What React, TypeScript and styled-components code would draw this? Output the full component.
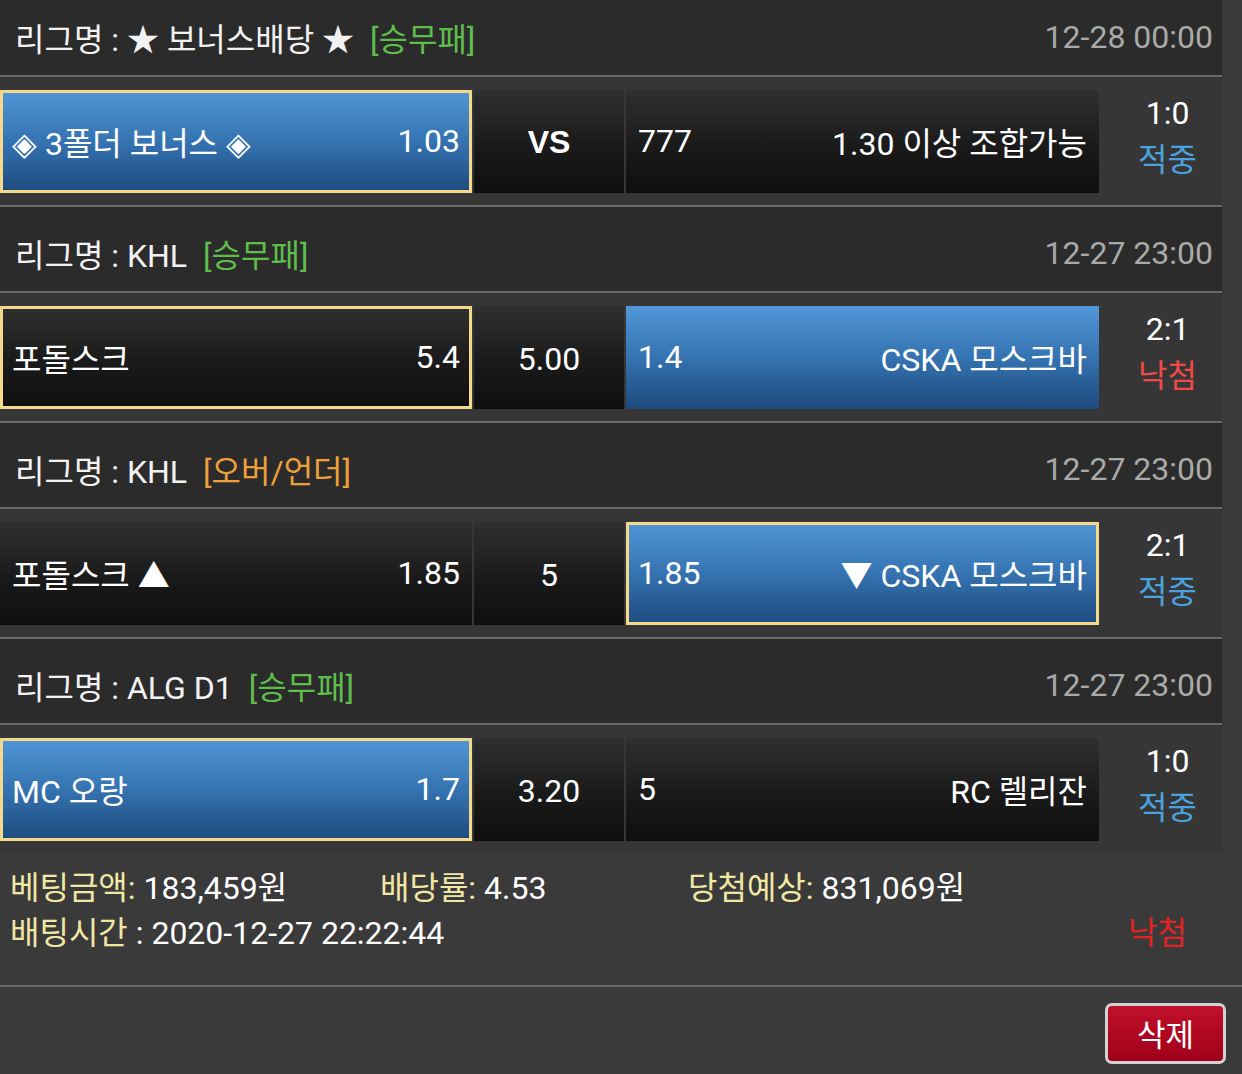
import React from 'react';
import styled, { createGlobalStyle, css } from 'styled-components';

const GlobalStyle = createGlobalStyle`
  html, body {
    margin: 0;
    background: #3a3a3a;
  }
  body {
    font-family: Roboto, "Noto Sans CJK KR", sans-serif;
    color: #fff;
    overflow: hidden;
  }
`;

const Page = styled.div`
  width: 1242px;
  height: 1074px;
  overflow: hidden;
  background: #3a3a3a;
`;

const List = styled.div`
  margin-top: -9px;
`;

const LeagueHeader = styled.div`
  display: flex;
  align-items: center;
  justify-content: space-between;
  width: 1222px;
  height: 84px;
  box-sizing: border-box;
  padding: 7px 9px 0 15px;
  background: #2b2b2b;
  font-size: 32px;
`;

const LeagueName = styled.span`
  color: #f2f2f2;
`;

const BetType = styled.span<{ $kind: 'wdl' | 'ou' }>`
  margin-left: 16px;
  color: ${({ $kind }) => ($kind === 'wdl' ? '#5fbe4b' : '#eda03a')};
`;

const MatchTime = styled.span`
  color: #a9a9a9;
`;

const Divider = styled.div<{ $full?: boolean }>`
  width: ${({ $full }) => ($full ? '100%' : '1222px')};
  height: 2px;
  background: #6a6a6a;
`;

const MatchRow = styled.div`
  display: grid;
  grid-template-columns: 472px 150px 473px 1fr;
  column-gap: 2px;
  align-items: start;
  width: 1222px;
  height: 128px;
  box-sizing: border-box;
  padding-top: 13px;
  background: #363636;
`;

const darkFill = css`
  background: linear-gradient(to bottom, #303030 0%, #1a1a1a 55%, #0e0e0e 100%);
`;

const blueFill = css`
  background: linear-gradient(to bottom, #5197d7 0%, #3573b1 50%, #1d4a7d 100%);
`;

const OddsCell = styled.div<{ $win?: boolean; $picked?: boolean }>`
  display: flex;
  align-items: center;
  justify-content: space-between;
  height: 103px;
  box-sizing: border-box;
  padding: 0 9px 2px 9px;
  ${({ $win }) => ($win ? blueFill : darkFill)};
  background-origin: border-box;
  border: 3px solid ${({ $picked }) => ($picked ? '#f4d98c' : 'transparent')};
  font-size: 32px;
  color: #fff;
  white-space: nowrap;
`;

const MidCell = styled.div<{ $bold?: boolean }>`
  display: flex;
  align-items: center;
  justify-content: center;
  height: 103px;
  padding-top: 2px;
  box-sizing: border-box;
  ${darkFill};
  font-size: 32px;
  font-weight: ${({ $bold }) => ($bold ? 700 : 400)};
  font-family: ${({ $bold }) => ($bold ? '"Liberation Sans", Arial, sans-serif' : 'inherit')};
`;

const ResultCell = styled.div`
  display: flex;
  flex-direction: column;
  align-items: center;
  padding-left: 12px;
  font-size: 32px;
  line-height: 47px;
`;

const Score = styled.span`
  color: #fff;
`;

const Outcome = styled.span<{ $hit: boolean }>`
  color: ${({ $hit }) => ($hit ? '#4aa2de' : '#ee4a4a')};
`;

const Summary = styled.div`
  height: 132px;
  box-sizing: border-box;
  padding: 13px 0 0 10px;
  font-size: 32px;
  line-height: 45px;
`;

const SummaryLine = styled.div`
  display: grid;
  grid-template-columns: 370px 308px 1fr;
`;

const SummaryFoot = styled.div`
  display: flex;
  justify-content: space-between;
  padding-right: 55px;
`;

const Label = styled.span`
  color: #f1e7a4;
`;

const Value = styled.span`
  color: #fff;
`;

const Lost = styled.span`
  color: #e32222;
`;

const ActionBar = styled.div`
  display: flex;
  justify-content: flex-end;
  padding: 16px 16px 0 0;
`;

const DeleteButton = styled.button`
  width: 121px;
  height: 61px;
  box-sizing: border-box;
  border: 3px solid #d2d2d2;
  border-radius: 7px;
  background: linear-gradient(to bottom, #c0102a, #a0001a);
  color: #fff;
  font-family: Roboto, "Noto Sans CJK KR", sans-serif;
  font-size: 31px;
  padding: 0 0 2px;
  cursor: pointer;
`;

type Side = { name: string; odds: string; win?: boolean; picked?: boolean };

interface IMatch {
  league: string;
  kind: 'wdl' | 'ou';
  time: string;
  home: Side;
  mid: string;
  away: Side;
  score: string;
  hit: boolean;
}

const matches: IMatch[] = [
  {
    league: '★ 보너스배당 ★',
    kind: 'wdl',
    time: '12-28 00:00',
    home: { name: '◈ 3폴더 보너스 ◈', odds: '1.03', win: true, picked: true },
    mid: 'VS',
    away: { name: '1.30 이상 조합가능', odds: '777' },
    score: '1:0',
    hit: true,
  },
  {
    league: 'KHL',
    kind: 'wdl',
    time: '12-27 23:00',
    home: { name: '포돌스크', odds: '5.4', picked: true },
    mid: '5.00',
    away: { name: 'CSKA 모스크바', odds: '1.4', win: true },
    score: '2:1',
    hit: false,
  },
  {
    league: 'KHL',
    kind: 'ou',
    time: '12-27 23:00',
    home: { name: '포돌스크 ▲', odds: '1.85' },
    mid: '5',
    away: { name: '▼ CSKA 모스크바', odds: '1.85', win: true, picked: true },
    score: '2:1',
    hit: true,
  },
  {
    league: 'ALG D1',
    kind: 'wdl',
    time: '12-27 23:00',
    home: { name: 'MC 오랑', odds: '1.7', win: true, picked: true },
    mid: '3.20',
    away: { name: 'RC 렐리잔', odds: '5' },
    score: '1:0',
    hit: true,
  },
];

export default function App() {
  return (
    <Page>
      <GlobalStyle />
      <List>
        {matches.map((m, i) => (
          <React.Fragment key={i}>
            <LeagueHeader>
              <span>
                <LeagueName>리그명 : {m.league}</LeagueName>
                <BetType $kind={m.kind}>{m.kind === 'wdl' ? '[승무패]' : '[오버/언더]'}</BetType>
              </span>
              <MatchTime>{m.time}</MatchTime>
            </LeagueHeader>
            <Divider />
            <MatchRow>
              <OddsCell $win={m.home.win} $picked={m.home.picked}>
                <span>{m.home.name}</span>
                <span>{m.home.odds}</span>
              </OddsCell>
              <MidCell $bold={m.mid === 'VS'}>{m.mid}</MidCell>
              <OddsCell $win={m.away.win} $picked={m.away.picked}>
                <span>{m.away.odds}</span>
                <span>{m.away.name}</span>
              </OddsCell>
              <ResultCell>
                <Score>{m.score}</Score>
                <Outcome $hit={m.hit}>{m.hit ? '적중' : '낙첨'}</Outcome>
              </ResultCell>
            </MatchRow>
            {i < matches.length - 1 && <Divider />}
          </React.Fragment>
        ))}
      </List>
      <Summary>
        <SummaryLine>
          <span>
            <Label>베팅금액:</Label> <Value>183,459원</Value>
          </span>
          <span>
            <Label>배당률:</Label> <Value>4.53</Value>
          </span>
          <span>
            <Label>당첨예상:</Label> <Value>831,069원</Value>
          </span>
        </SummaryLine>
        <SummaryFoot>
          <span>
            <Label>배팅시간</Label> <Value>: 2020-12-27 22:22:44</Value>
          </span>
          <Lost>낙첨</Lost>
        </SummaryFoot>
      </Summary>
      <Divider $full />
      <ActionBar>
        <DeleteButton>삭제</DeleteButton>
      </ActionBar>
    </Page>
  );
}
